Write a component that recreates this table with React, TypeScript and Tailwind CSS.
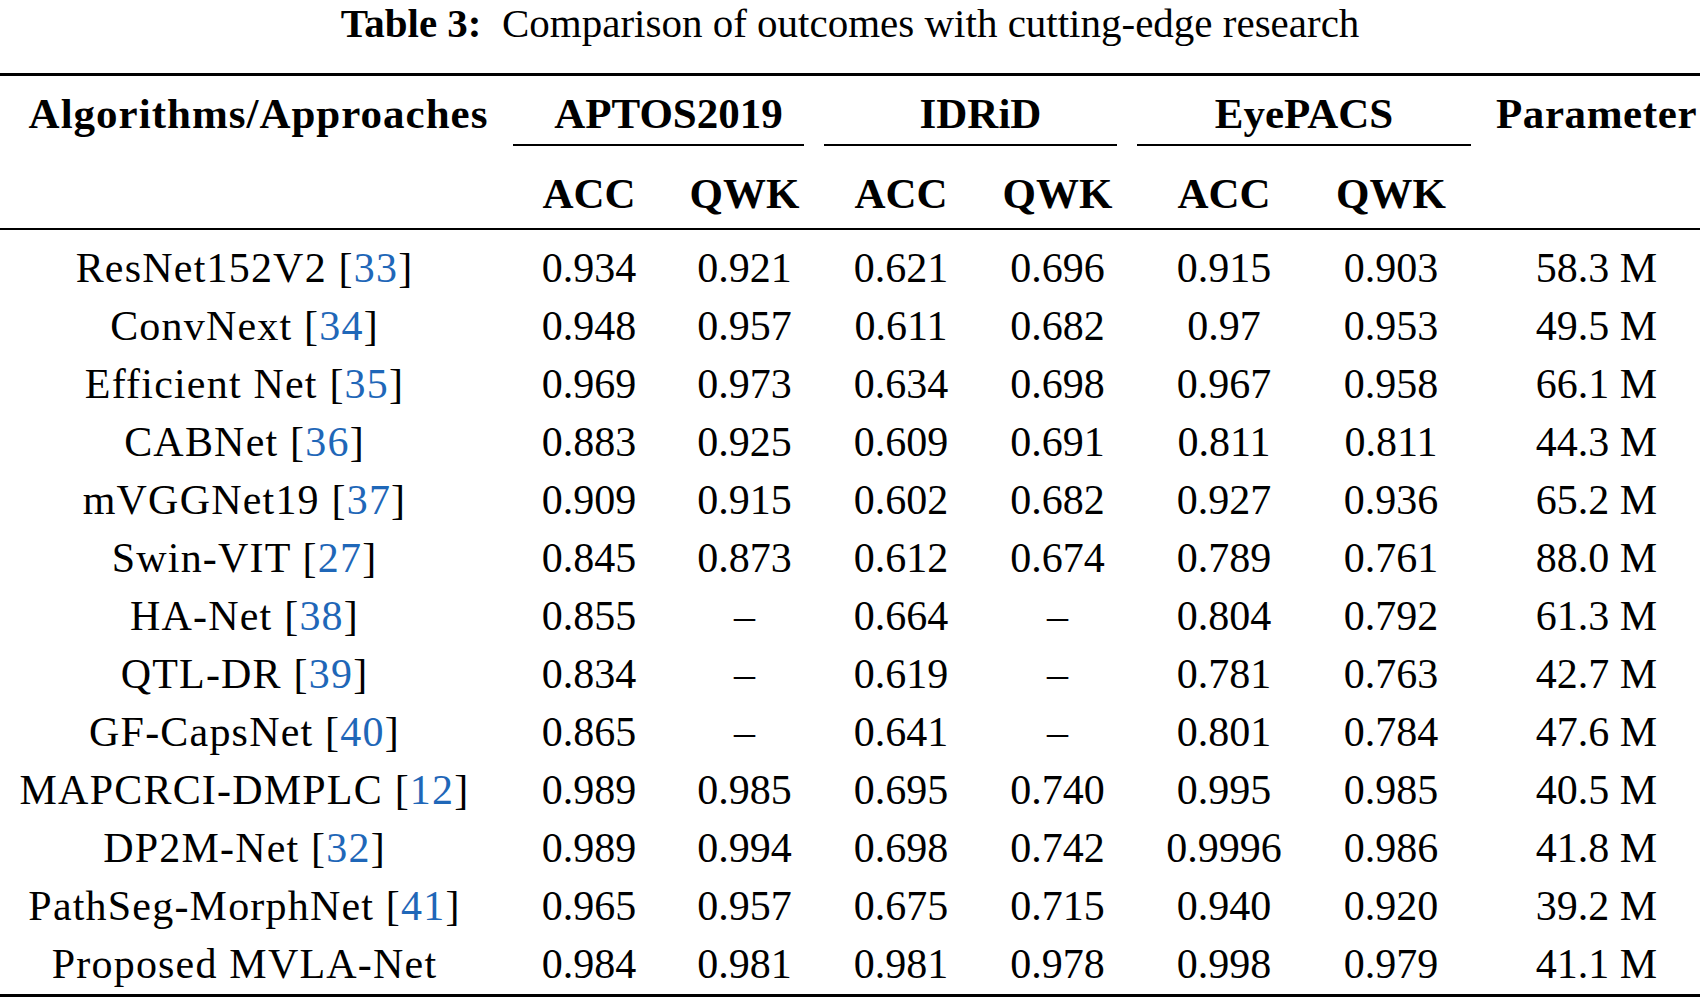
import React from "react";

type Row = { name: string; ref?: string; v: string[]; p: string };

const rows: Row[] = [
  { name: "ResNet152V2", ref: "33", v: ["0.934", "0.921", "0.621", "0.696", "0.915", "0.903"], p: "58.3 M" },
  { name: "ConvNext", ref: "34", v: ["0.948", "0.957", "0.611", "0.682", "0.97", "0.953"], p: "49.5 M" },
  { name: "Efficient Net", ref: "35", v: ["0.969", "0.973", "0.634", "0.698", "0.967", "0.958"], p: "66.1 M" },
  { name: "CABNet", ref: "36", v: ["0.883", "0.925", "0.609", "0.691", "0.811", "0.811"], p: "44.3 M" },
  { name: "mVGGNet19", ref: "37", v: ["0.909", "0.915", "0.602", "0.682", "0.927", "0.936"], p: "65.2 M" },
  { name: "Swin-VIT", ref: "27", v: ["0.845", "0.873", "0.612", "0.674", "0.789", "0.761"], p: "88.0 M" },
  { name: "HA-Net", ref: "38", v: ["0.855", "–", "0.664", "–", "0.804", "0.792"], p: "61.3 M" },
  { name: "QTL-DR", ref: "39", v: ["0.834", "–", "0.619", "–", "0.781", "0.763"], p: "42.7 M" },
  { name: "GF-CapsNet", ref: "40", v: ["0.865", "–", "0.641", "–", "0.801", "0.784"], p: "47.6 M" },
  { name: "MAPCRCI-DMPLC", ref: "12", v: ["0.989", "0.985", "0.695", "0.740", "0.995", "0.985"], p: "40.5 M" },
  { name: "DP2M-Net", ref: "32", v: ["0.989", "0.994", "0.698", "0.742", "0.9996", "0.986"], p: "41.8 M" },
  { name: "PathSeg-MorphNet", ref: "41", v: ["0.965", "0.957", "0.675", "0.715", "0.940", "0.920"], p: "39.2 M" },
  { name: "Proposed MVLA-Net", v: ["0.984", "0.981", "0.981", "0.978", "0.998", "0.979"], p: "41.1 M" },
];

const cols = "grid grid-cols-[503px_172px_139px_174px_139px_194px_160px_219px]";

function Group({ label, shift }: { label: string; shift?: boolean }) {
  return (
    <div className="col-span-2 flex flex-col pt-[14px]">
      <div className={`h-[48px] leading-[48px] text-center ${shift ? "pl-[20px]" : ""}`}>{label}</div>
      <div className="mt-[6px] mx-[10px] h-[2px] bg-black" />
    </div>
  );
}

export default function App() {
  return (
    <div className="w-[1700px] h-[1002px] bg-white text-black font-['Liberation_Serif',serif] overflow-hidden">
      <div className="pt-[3px] h-[43px] leading-[40px] text-[41px] text-center whitespace-pre">
        <span className="font-bold">Table 3:</span>
        <span>{"  Comparison of outcomes with cutting-edge research"}</span>
      </div>
      <div className="mt-[30px] h-[3px] bg-black" />
      <div className={`${cols} font-bold text-[43px]`}>
        <div className="pt-[14px] h-[62px] leading-[48px] text-center pl-[14px] whitespace-nowrap tracking-[1px]">
          Algorithms/Approaches
        </div>
        <Group label="APTOS2019" shift />
        <Group label="IDRiD" shift />
        <Group label="EyePACS" />
        <div className="pt-[14px] leading-[48px] text-center pl-[12px] tracking-[0.6px] whitespace-nowrap">Parameter</div>
        <div />
        {["ACC", "QWK", "ACC", "QWK", "ACC", "QWK"].map((h, i) => (
          <div key={i} className={`pt-[24px] h-[72px] leading-[48px] text-center ${i === 5 ? "pr-[20px]" : ""}`}>
            {h}
          </div>
        ))}
        <div />
      </div>
      <div className="mt-[10px] h-[2px] bg-black" />
      <div className={`${cols} pt-[9px] text-[42px]`}>
        {rows.map((r, ri) => (
          <React.Fragment key={ri}>
            <div className="h-[58px] leading-[58px] text-center whitespace-nowrap pr-[14px] tracking-[1.2px]">
              {r.name}
              {r.ref && (
                <>
                  {" ["}
                  <span className="text-[#1f67b8]">{r.ref}</span>
                  {"]"}
                </>
              )}
            </div>
            {r.v.map((x, i) => (
              <div key={i} className={`h-[58px] leading-[58px] text-center ${i === 5 ? "pr-[20px]" : ""}`}>
                {x}
              </div>
            ))}
            <div className="h-[58px] leading-[58px] text-center pl-[12px] whitespace-nowrap">{r.p}</div>
          </React.Fragment>
        ))}
      </div>
      <div className="mt-[1px] h-[3px] bg-black" />
    </div>
  );
}
